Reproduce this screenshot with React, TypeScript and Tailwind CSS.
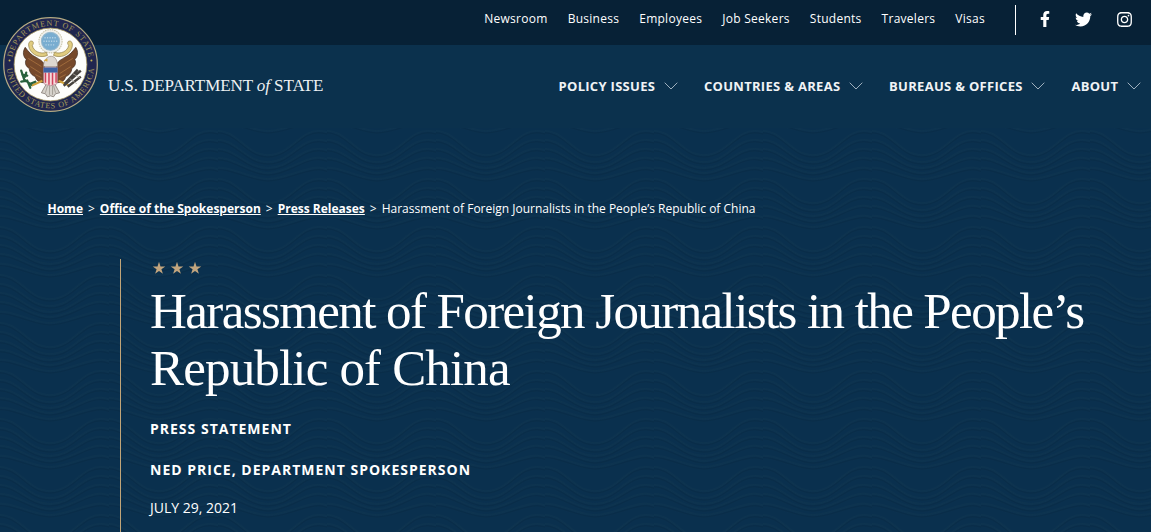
import { FaFacebookF, FaInstagram, FaTwitter } from 'react-icons/fa';

const utilityLinks = ['Newsroom', 'Business', 'Employees', 'Job Seekers', 'Students', 'Travelers', 'Visas'];

const menuItems = ['Policy Issues', 'Countries & Areas', 'Bureaus & Offices', 'About'];

const breadcrumbs = ['Home', 'Office of the Spokesperson', 'Press Releases'];

export default function App() {
  return (
    <div className="relative h-[532px] w-[1151px] overflow-hidden bg-[#0a304e] font-['Open_Sans',sans-serif] text-white">
      <TopBar />
      <MainNav />
      <Hero />
      {/* The seal straddles the top bar and the main nav */}
      <Seal className="absolute left-[3px] top-[17px] h-[95px] w-[95px]" />
    </div>
  );
}

function TopBar() {
  return (
    <div className="flex h-[45px] items-start justify-end bg-[#072136] pr-[18px]">
      <nav className="flex gap-5 pt-[9px] text-[12px] leading-5 tracking-[0.27px]">
        {utilityLinks.map((label) => (
          <a key={label} href="#">
            {label}
          </a>
        ))}
      </nav>
      <div className="ml-[30px] mt-[5px] flex h-[30px] items-center border-l border-white pb-[2px] pl-6">
        <FaFacebookF className="mr-[25px] h-4 w-[10px]" />
        <FaTwitter className="mr-6 h-[17px] w-[17px]" />
        <FaInstagram className="h-[17px] w-[17px]" />
      </div>
    </div>
  );
}

function MainNav() {
  return (
    <header className="flex h-[83px] items-start justify-between bg-[#0b314d] pl-[108px] pr-[10px]">
      <a
        href="#"
        className="mt-[29px] whitespace-nowrap font-['Liberation_Serif',serif] text-[17px] leading-6 tracking-[-0.08px] text-[#eef1f4]"
      >
        U.S. DEPARTMENT <em>of</em> STATE
      </a>
      <nav className="mt-[31px] flex gap-[26px]">
        {menuItems.map((label) => (
          <a
            key={label}
            href="#"
            className="flex items-center gap-[8.7px] text-[13px] font-bold uppercase leading-5 tracking-[0.3px] text-[#f0f3f6]"
          >
            {label}
            <svg viewBox="0 0 14 8" className="h-2 w-[14px]" fill="none" stroke="#9fb0be" strokeWidth="1">
              <path d="M.7.7 7 7 13.3.7" />
            </svg>
          </a>
        ))}
      </nav>
    </header>
  );
}

function Hero() {
  return (
    <main className="relative h-[404px]">
      <WavePattern />
      <div className="relative pt-[71px]">
        <div className="flex gap-[5px] pl-[47.5px] text-[12px] leading-5">
          {breadcrumbs.map((crumb) => (
            <span key={crumb} className="flex gap-[5px]">
              <a href="#" className="font-bold underline">
                {crumb}
              </a>
              <span>&gt;</span>
            </span>
          ))}
          <span>Harassment of Foreign Journalists in the People’s Republic of China</span>
        </div>
        <section className="ml-[120px] mt-10 h-[273px] border-l border-[#c2a578] pl-[29px]">
          <div className="flex gap-1 pl-[2px] pt-[2px]">
            <Star />
            <Star />
            <Star />
          </div>
          <h1 className="mt-2 whitespace-nowrap font-['Liberation_Serif',serif] text-[51px] leading-[57px]">
            <span className="block tracking-[-1.59px]">Harassment of Foreign Journalists in the People’s</span>
            <span className="block tracking-[-0.83px]">Republic of China</span>
          </h1>
          <p className="mt-[22px] text-[14px] font-bold uppercase leading-5 tracking-[1px]">Press Statement</p>
          <p className="mt-[21px] text-[14px] font-bold uppercase leading-5 tracking-[1px]">
            Ned Price, Department Spokesperson
          </p>
          <p className="mt-[18px] text-[14px] uppercase leading-5">July 29, 2021</p>
        </section>
      </div>
    </main>
  );
}

function Star() {
  return (
    <svg viewBox="0 0 14 14" className="h-[14px] w-[14px]" fill="#c2a57e">
      <path d="M7 .8 8.5 5.4h4.8L9.4 8.2l1.5 4.6L7 10l-3.900 2.800 1.500-4.600L.7 5.400h4.800Z" />
    </svg>
  );
}

// One tile holds a 48px group of nested waves; neighbours are drawn too so the seams close
const waveGroups = [-96, -48, 0, 48];
const waves = [
  { y: 0, d: 'M-5 3C20 0 26 27 50 27S82 0 104 3S128 26 158 27' },
  { y: 9, d: 'M-5 3C18 0 26 25 50 25S82 0 104 3S128 24 158 25' },
  { y: 18, d: 'M-5 3C16 0 27 22 50 22S84 0 104 3S128 21 158 22' },
  { y: 27, d: 'M-5 3C14 0 30 18 50 18S88 0 104 3S128 17 158 18' },
  { y: 37, d: 'M-5 3C12 0 32 14 50 14S92 0 104 3S128 13 158 14' },
];

function WavePattern() {
  return (
    <svg className="absolute inset-0 h-full w-full" aria-hidden="true">
      <defs>
        <pattern id="waves" width="109" height="48" patternUnits="userSpaceOnUse">
          {waveGroups.map((top) =>
            waves.map((wave) => (
              <g key={`${top}-${wave.y}`} transform={`translate(0 ${top + wave.y})`} fill="none">
                <path d={wave.d} stroke="#12374f" strokeWidth="1.6" opacity=".45" />
                <path d={wave.d} transform="translate(0 2)" stroke="#082841" strokeWidth="1.4" opacity=".4" />
              </g>
            ))
          )}
        </pattern>
      </defs>
      <rect width="100%" height="100%" fill="url(#waves)" />
    </svg>
  );
}

function Seal({ className }: { className?: string }) {
  return (
    <svg viewBox="0 0 94 94" className={className} role="img" aria-label="Department of State seal">
      <defs>
        <path id="seal-top" d="M8.7 47a38.3 38.3 0 0 1 76.6 0" />
        <path id="seal-bottom" d="M3.600 47a43.400 43.400 0 0 0 86.800 0" />
      </defs>
      <circle cx="47" cy="47" r="46.3" fill="#20264f" stroke="#b5aa83" strokeWidth="1.2" />
      <circle cx="47" cy="47" r="36" fill="#fdfdfb" stroke="#a99a62" strokeWidth=".8" />
      <g fill="#a69c5a" fontFamily="Liberation Serif, serif" fontSize="8" textAnchor="middle">
        <text textLength="106">
          <textPath href="#seal-top" startOffset="50%">DEPARTMENT OF STATE</textPath>
        </text>
        <text textLength="128">
          <textPath href="#seal-bottom" startOffset="50%">UNITED STATES OF AMERICA</textPath>
        </text>
      </g>
      <circle cx="6.5" cy="43" r="1" fill="#c4b552" />
      <circle cx="87.5" cy="43" r="1" fill="#c4b552" />

      {/* Glory and constellation */}
      <circle cx="47" cy="24" r="11.5" fill="#f1f1ec" stroke="#c9c3a6" strokeDasharray="1.5 .8" />
      <circle cx="47" cy="24" r="9" fill="#79add0" stroke="#98b9cd" />
      <path d="M41 20.500h12M40 24h14M42 27.500h10" stroke="#b6d3e5" strokeWidth="1.3" strokeDasharray="1.2 1.3" />

      {/* Scroll */}
      <path
        d="M27 24c3-1 4 2 2 4 1 6 8 9 14 7l1 3c-7 3-15 0-18-7-1-3-1-6 1-7ZM67 24c-3-1-4 2-2 4-1 6-8 9-14 7l-1 3c7 3 15 0 18-7 1-3 1-6-1-7Z"
        fill="#e0cc80"
        stroke="#94814a"
        strokeWidth=".7"
      />

      {/* Wings */}
      <path
        d="M22 30c-3 5-2 9 1 12-2 4 0 7 3 9 0 4 3 7 6 8 1 4 4 6 9 6V47c-2-4-5-5-8-7-5-2-8-6-11-10Z"
        fill="#76492b"
        stroke="#442d20"
        strokeWidth=".7"
      />
      <path
        d="M72 30c3 5 2 9-1 12 2 4 0 7-3 9 0 4-3 7-6 8-1 4-4 6-9 6V47c2-4 5-5 8-7 5-2 8-6 11-10Z"
        fill="#76492b"
        stroke="#442d20"
        strokeWidth=".7"
      />
      <path
        d="m25 41 13 8M27 49l11 7M32 57l6 3M69 41l-13 8M67 49l-11 7M62 57l-6 3"
        stroke="#a9723f"
        strokeWidth=".8"
      />

      {/* Head */}
      <path d="M40 49c0-6 3-9 6-10 5-1 8 3 8 10Z" fill="#ddd8d1" stroke="#8b7d72" strokeWidth=".6" />
      <path d="m44 41-4 2 4 1Z" fill="#d9aa3a" />

      {/* Tail, olive branch and arrows */}
      <path d="m43 66-5 9 4 1 2 3 3-1 3 1 2-3 4-1-5-9Z" fill="#d6d2cb" stroke="#716861" strokeWidth=".7" />
      <path d="m44 68-2 7m4-7v9m3-9v9m1-9 2 7" stroke="#8a8279" strokeWidth=".6" />
      <path d="m39 63-11 5M55 63l11 5" stroke="#d0a23a" strokeWidth="2.2" />
      <path
        d="m28 67-7-5-3-9M24 63l-6 1m6-6-5-1m3 2 1-4m1 8 3 7m5-6-5 2"
        fill="none"
        stroke="#28613c"
        strokeWidth="2.200"
        strokeLinecap="round"
      />
      <path d="m60 68 17-15M61 66l13-14M64 69l13-10" stroke="#45413d" strokeWidth="2.4" />
      <path d="m66 61 7 5m-4-10 7 4" stroke="#aaa59d" strokeWidth=".8" />

      {/* Shield */}
      <path d="M40 50h14v14c0 3-3 3-7 4-4-1-7-1-7-4Z" fill="#f5dada" stroke="#93596a" strokeWidth=".5" />
      <path d="M42 55v10m3.500-10v12m3.500-12v12m3.500-12v10" stroke="#d0435e" strokeWidth="1.500" />
      <path d="M40 50h14v5H40Z" fill="#3c62a4" />
    </svg>
  );
}
